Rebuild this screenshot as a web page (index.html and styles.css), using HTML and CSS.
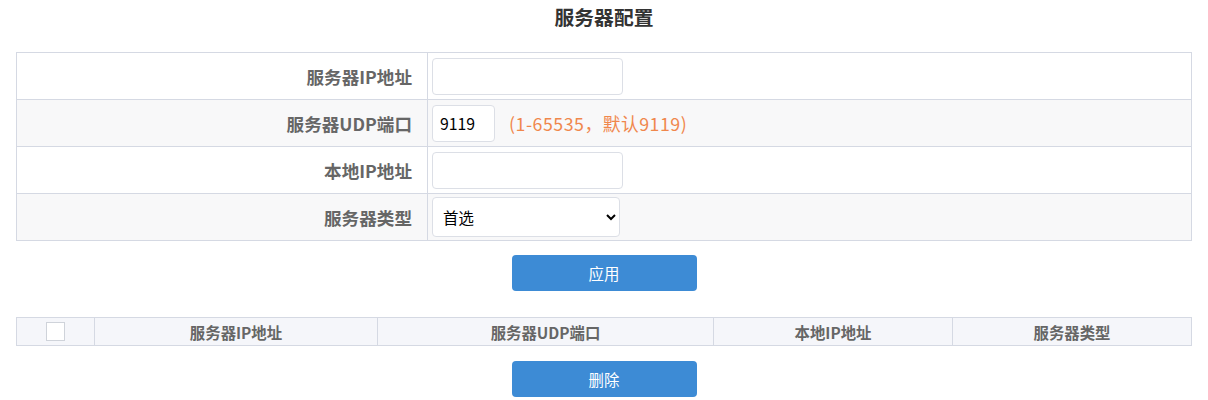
FILE: index.html
```html
<!DOCTYPE html>
<html lang="zh-CN">
<head>
<meta charset="utf-8">
<title>服务器配置</title>
<link rel="stylesheet" href="styles.css">
</head>
<body>
<div class="page">
  <h1 class="title">服务器配置</h1>
  <table class="form-table">
    <tr>
      <td class="label">服务器IP地址</td>
      <td class="field"><input class="text-input" type="text"></td>
    </tr>
    <tr class="alt">
      <td class="label">服务器UDP端口</td>
      <td class="field"><input class="text-input port" type="text" value="9119"><span class="hint">(1-65535，默认9119)</span></td>
    </tr>
    <tr>
      <td class="label">本地IP地址</td>
      <td class="field"><input class="text-input" type="text"></td>
    </tr>
    <tr class="alt">
      <td class="label">服务器类型</td>
      <td class="field">
        <select class="select">
          <option>首选</option>
          <option>备选</option>
        </select>
      </td>
    </tr>
  </table>
  <div class="actions"><button class="btn" type="button">应用</button></div>
  <table class="list-table">
    <colgroup>
      <col class="c-check">
      <col class="c-ip">
      <col class="c-port">
      <col class="c-local">
      <col>
    </colgroup>
    <tr>
      <th><input class="check" type="checkbox"></th>
      <th>服务器IP地址</th>
      <th>服务器UDP端口</th>
      <th>本地IP地址</th>
      <th>服务器类型</th>
    </tr>
  </table>
  <div class="actions second"><button class="btn" type="button">删除</button></div>
</div>
</body>
</html>
```
FILE: styles.css
```css
html, body {
  margin: 0;
  padding: 0;
  background: #fff;
}
body {
  font-family: "Microsoft YaHei", "Noto Sans CJK SC", "Noto Sans", sans-serif;
  color: #333;
}
.page {
  padding: 0 16px;
}
.title {
  margin: 0;
  padding-top: 3px;
  height: 49px;
  line-height: 28px;
  font-size: 19.8px;
  font-weight: bold;
  text-align: center;
  color: #333;
}
.form-table {
  width: 100%;
  border-collapse: collapse;
  border: 1px solid #d5d9e3;
}
.form-table td {
  border: 1px solid #d5d9e3;
  height: 47px;
  padding: 0;
  box-sizing: border-box;
}
.form-table tr.alt td {
  background: #f8f8f9;
}
.label {
  width: 411px;
  text-align: right;
  padding-right: 15px !important;
  font-size: 17.6px;
  font-weight: bold;
  color: #666;
}
.field {
  padding-left: 4px !important;
  white-space: nowrap;
}
.text-input {
  box-sizing: border-box;
  width: 191px;
  height: 37px;
  border: 1px solid #dcdfe6;
  border-radius: 4px;
  padding: 0 7px;
  font-family: "Microsoft YaHei", "Noto Sans CJK SC", sans-serif;
  font-size: 15.8px;
  color: #000;
  background: #fff;
  vertical-align: middle;
  outline: none;
}
.text-input.port {
  width: 63px;
}
.hint {
  margin-left: 14px;
  font-size: 17.8px;
  letter-spacing: 0.5px;
  color: #f0874c;
  vertical-align: middle;
}
.select {
  box-sizing: border-box;
  width: 188px;
  height: 40px;
  border: 1px solid #dcdfe6;
  border-radius: 4px;
  padding: 0 6px;
  font-family: "Microsoft YaHei", "Noto Sans CJK SC", sans-serif;
  font-size: 15.4px;
  color: #000;
  background: #fff;
  vertical-align: middle;
}
.actions {
  display: flex;
  justify-content: center;
  padding: 14px 0 26px;
}
.actions.second {
  padding: 15px 0 0;
}
.btn {
  width: 185px;
  height: 36px;
  border: none;
  border-radius: 4px;
  background: #3d8bd5;
  color: #fff;
  font-family: "Microsoft YaHei", "Noto Sans CJK SC", sans-serif;
  font-size: 15.4px;
  cursor: pointer;
}
.list-table {
  width: 100%;
  border-collapse: collapse;
  border: 1px solid #d5d9e3;
  background: #f5f6fa;
}
.list-table th {
  border: 1px solid #d5d9e3;
  height: 28px;
  padding: 0;
  box-sizing: border-box;
  font-size: 15.4px;
  font-weight: bold;
  color: #666;
  text-align: center;
}
.c-check { width: 78px; }
.c-ip { width: 283px; }
.c-port { width: 336px; }
.c-local { width: 239px; }
.check {
  appearance: none;
  -webkit-appearance: none;
  display: block;
  margin: 0 auto;
  width: 19px;
  height: 19px;
  border: 1px solid #cfd3da;
  background: #fff;
  box-sizing: border-box;
}
```
